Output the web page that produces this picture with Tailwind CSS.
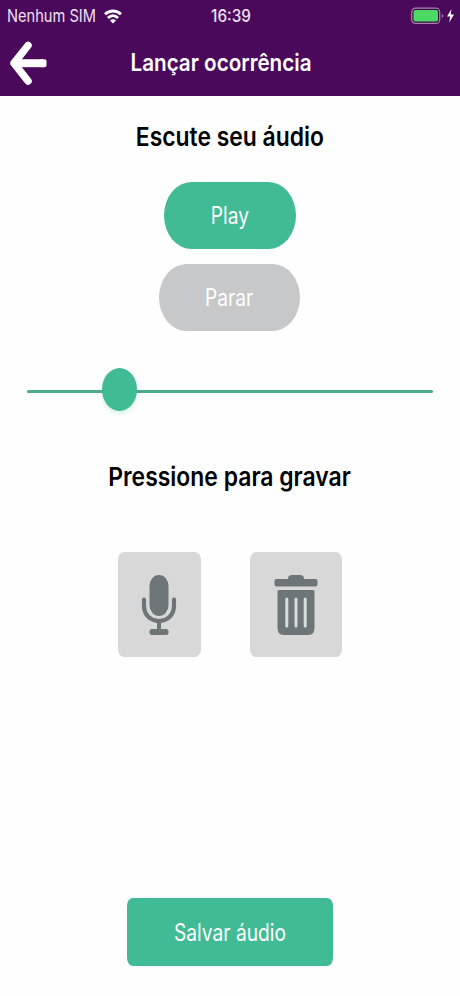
<!DOCTYPE html>
<html lang="pt-BR">
<head>
    <meta charset="UTF-8">
    <meta name="viewport" content="width=device-width, initial-scale=1.0">
    <title>Lançar ocorrência</title>
    <script src="https://cdn.jsdelivr.net/npm/@tailwindcss/browser@4"></script>
</head>
<body class="bg-[#fefefe] font-['Inter','Liberation_Sans',sans-serif]">
    <div class="flex flex-col w-full h-[996px] overflow-hidden">
        <!-- Cabeçalho -->
        <header class="h-24 shrink-0 bg-[#4b095c] text-white">
            <div class="grid grid-cols-3 items-center h-8 text-[17px] text-[#eee0f0]">
                <div class="flex items-center pl-[7px]">
                    <span class="w-[97px] pt-0.5 whitespace-nowrap origin-left scale-x-[.86]">Nenhum SIM</span>
                    <svg class="w-[18px] h-[15px] shrink-0" viewBox="0 0 18 15" fill="none" stroke="#fff" stroke-width="3">
                        <path d="M1 5.3C5.5.8 12.500.8 17 5.300"/>
                        <path d="M4 9c3-3 7-3 10 0"/>
                        <path d="M6 11.400Q9 9.300 12 11.400L9 14.600z" fill="#fff" stroke="none"/>
                    </svg>
                </div>
                <span class="pt-0.5 pl-[3px] text-center font-medium scale-x-[.9]">16:39</span>
                <div class="flex items-center justify-end pr-[6px]">
                    <svg class="w-[43px] h-[18px]" viewBox="0 0 43 18">
                        <rect x=".7" y="1.2" width="28" height="15.2" rx="4" fill="#3a0a45" stroke="#a886b0" stroke-width="1.2"/>
                        <rect x="2.5" y="3" width="24.5" height="11.6" rx="2" fill="#4cd964"/>
                        <path d="M30.8 6.5q3 2.3 0 4.6z" fill="#a886b0"/>
                        <path d="M40.500 2L36 9.500h3.200l-1 6L43 7.500h-3.300z" fill="#fff"/>
                    </svg>
                </div>
            </div>
            <div class="grid grid-cols-[60px_1fr_78px] items-center h-[62px]">
                <button class="pl-[9px]" aria-label="Voltar">
                    <svg class="w-[38px] h-[46px]" viewBox="0 0 38 46" fill="none" stroke="#fff" stroke-linecap="round" stroke-linejoin="round">
                        <path d="M19 5.500L5 23.200 19 41" stroke-width="7.500"/>
                        <path d="M5 23.200h29" stroke-width="8" stroke-linecap="butt"/>
                        <path d="M33 21.200h2.500v4H33z" fill="#fff" stroke-width="4"/>
                    </svg>
                </button>
                <h1 class="text-center text-[24px] font-semibold whitespace-nowrap scale-x-[.86]">Lançar ocorrência</h1>
            </div>
        </header>

        <main class="flex flex-col items-center flex-1">
            <!-- Reprodução -->
            <h2 class="mt-[23px] h-9 leading-9 text-[26px] font-semibold text-black whitespace-nowrap scale-x-[.88]">Escute seu áudio</h2>
            <button class="mt-[27px] w-[132px] h-[67px] rounded-[28px/34px] bg-[#41bb96] text-white text-[24px]">
                <span class="inline-block pt-px scale-x-[.8]">Play</span>
            </button>
            <button class="mt-[15px] mr-px w-[141px] h-[67px] rounded-[28px/34px] bg-[#c6c8c9] text-white text-[24px]">
                <span class="inline-block pt-px scale-x-[.8]">Parar</span>
            </button>

            <div class="relative mt-[59px] w-[406px] h-[3px] rounded-sm bg-[#4bab8a]">
                <div class="absolute left-[75px] -top-[22px] w-[35px] h-[43px] rounded-[50%] bg-[#41bb96] shadow-[0_3px_4px_#41bb9630]"></div>
            </div>

            <!-- Gravação -->
            <h2 class="mt-[66px] h-9 leading-9 text-[26px] font-semibold text-black whitespace-nowrap scale-x-[.882]">Pressione para gravar</h2>
            <div class="flex gap-[49px] mt-[57px]">
                <button class="w-[83px] h-[105px] rounded-[6px/8px] bg-[#d8d8d8] flex items-center justify-center" aria-label="Gravar">
                    <svg class="w-[36px] h-[62px] mr-px" viewBox="0 0 36 62" fill="#6d7578">
                        <rect x="8.500" y="1" width="19" height="41" rx="9.500" ry="11"/>
                        <path d="M3 25.500v6C3 41 9.500 47 18 47s15-6 15-15.500v-6" fill="none" stroke="#6d7578" stroke-width="4.200" stroke-linecap="round"/>
                        <path d="M16 46h4v11h-4z"/>
                        <rect x="8.500" y="55" width="19" height="6" rx="2.500"/>
                    </svg>
                </button>
                <button class="w-[92px] h-[105px] rounded-[6px/8px] bg-[#d8d8d8] flex items-center justify-center" aria-label="Excluir">
                    <svg class="w-[44px] h-[62px]" viewBox="0 0 44 62" fill="#6d7578">
                        <path d="M14 5c0-3 1.500-4 4-4h8c2.500 0 4 1 4 4h11.500q2 0 2 2v3.500q0 2-2 2h-39q-2 0-2-2V7q0-2 2-2z"/>
                        <path d="M5 16h34q1.500 0 1.500 1.500V54q0 7-6 7h-25q-6 0-6-7V17.500Q3.500 16 5 16z"/>
                        <path d="M12.800 25v27M22 25v27M31.200 25v27" fill="none" stroke="#d8dcde" stroke-width="3" stroke-linecap="round"/>
                    </svg>
                </button>
            </div>

            <button class="mt-auto mb-[30px] w-[206px] h-[68px] rounded-[6px/8px] bg-[#41bb96] text-white text-[24px]">
                <span class="inline-block pt-px whitespace-nowrap scale-x-[.8]">Salvar áudio</span>
            </button>
        </main>
    </div>
</body>
</html>
